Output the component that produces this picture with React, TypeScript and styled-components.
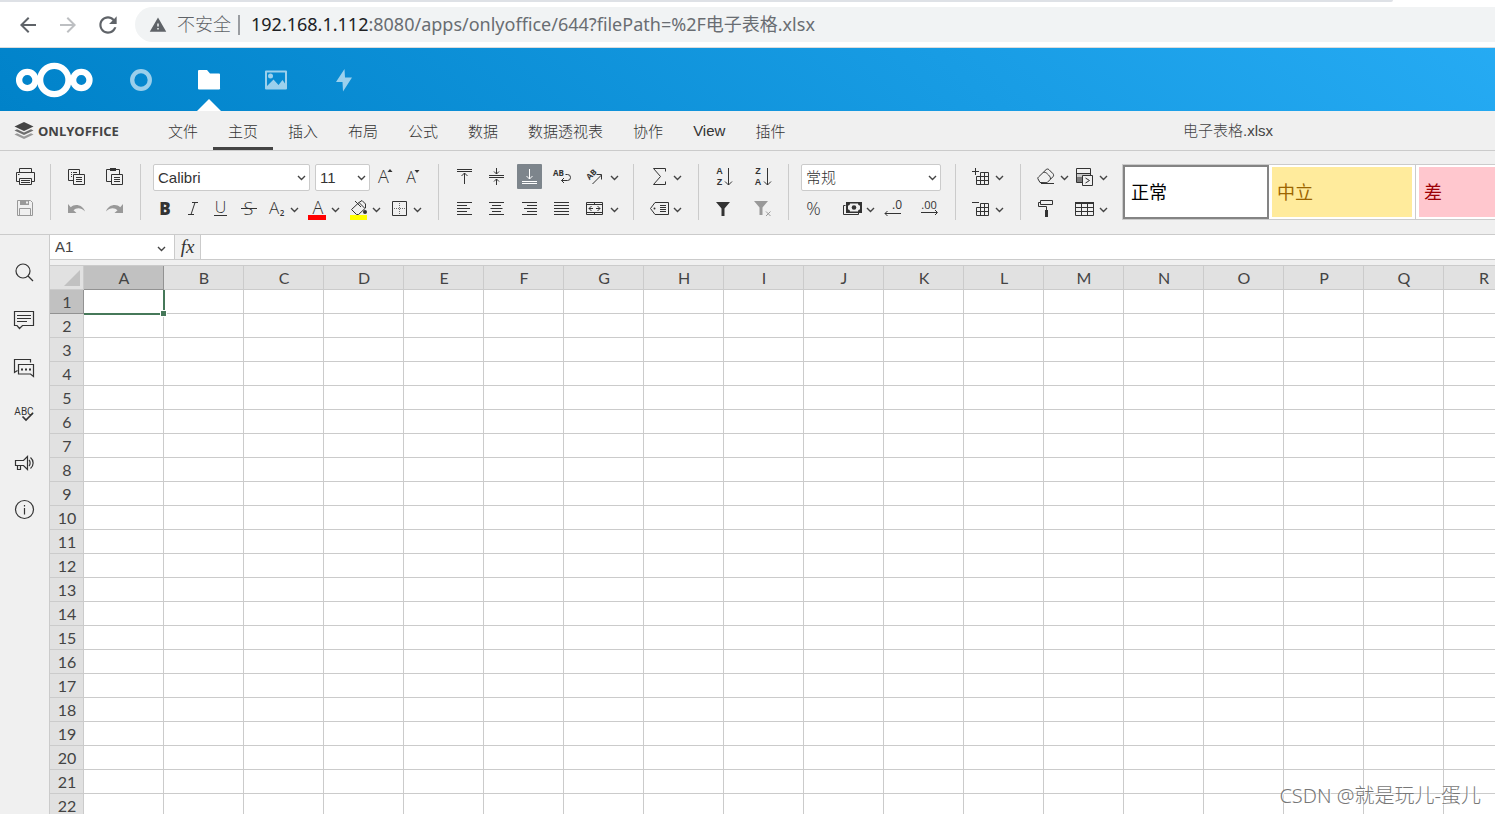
import React from "react";
import styled, { createGlobalStyle, css } from "styled-components";

const ui = `"Liberation Sans", "Noto Sans CJK SC", sans-serif`;
const humanist = `"Open Sans", "Noto Sans CJK SC", sans-serif`;
const ink = "#333";
const line = "#cbcbcb";

const GlobalStyle = createGlobalStyle`
  *, *::before, *::after { box-sizing: border-box; }
  body { margin: 0; background: #fff; color: #444; font-family: ${ui}; font-size: 15px; }
  button { border: 0; padding: 0; background: none; color: inherit; font: inherit; }
  a { color: inherit; text-decoration: none; }
  svg { display: block; flex: none; overflow: visible; }
`;

const Page = styled.div`
  display: flex;
  flex-direction: column;
  height: 100vh;
  overflow: hidden;
  position: relative;
`;

/* ---------- browser bar ---------- */

const TabStrip = styled.div`
  flex: none;
  height: 2px;
  margin-right: 102px;
  background: #dee1e6;
  border-bottom-right-radius: 4px;
`;

const BrowserBar = styled.header`
  flex: none;
  display: flex;
  align-items: center;
  height: 46px;
  padding-left: 8px;
  border-bottom: 1px solid #dcdcdc;
`;

const BrowserButton = styled.button<{ $dim?: boolean }>`
  display: flex;
  justify-content: center;
  width: 40px;
  color: ${(p) => (p.$dim ? "#bdbfc2" : "#5f6368")};
`;

const Omnibox = styled.div`
  flex: 1;
  display: flex;
  align-items: center;
  height: 35px;
  margin-left: 7px;
  padding-left: 14px;
  border-radius: 18px 0 0 18px;
  background: #f1f3f4;
  color: #5f6368;
  font-family: ${humanist};
  font-size: 18px;
  font-weight: 300;
  white-space: nowrap;
`;

const Security = styled.span`
  margin-left: 10px;
  padding: 0 7px 4px 0;
`;

const Divider = styled.span`
  width: 2px;
  height: 20px;
  margin-right: 11px;
  background: #9a9da1;
`;

const Url = styled.span`
  padding-bottom: 4px;
  color: #696d72;
  font-family: "Noto Sans", "Noto Sans CJK SC", sans-serif;
  font-weight: 400;
  b { font-weight: inherit; color: #202124; }
`;

/* ---------- cloud header ---------- */

const CloudBar = styled.header`
  flex: none;
  display: flex;
  align-items: stretch;
  height: 63px;
  padding-left: 15px;
  background: linear-gradient(40deg, #0082c9 0%, #30b6ff 128%);
  color: #fff;
`;

const Brand = styled.a`
  display: flex;
  align-items: center;
  width: 92px;
`;

const AppLink = styled.a<{ $active?: boolean }>`
  position: relative;
  display: flex;
  align-items: center;
  justify-content: center;
  width: 68px;
  svg { opacity: ${(p) => (p.$active ? 1 : 0.6)}; }
  ${(p) =>
    p.$active &&
    css`
      &::after {
        content: "";
        position: absolute;
        bottom: 0;
        left: 22px;
        border: 12px solid transparent;
        border-top-width: 0;
        border-bottom-color: #fff;
      }
    `}
`;

/* ---------- editor tabs ---------- */

const TabBar = styled.div`
  flex: none;
  display: flex;
  height: 40px;
  border-bottom: 1px solid ${line};
  background: #f0f0f0;
`;

const OfficeLogo = styled.a`
  display: flex;
  align-items: center;
  gap: 4px;
  width: 153px;
  padding-left: 14px;
  font-family: "Open Sans", sans-serif;
  font-size: 13px;
  font-weight: 700;
`;

const Tabs = styled.nav`
  display: flex;
`;

const Tab = styled.button<{ $active?: boolean }>`
  padding: 2px 15px 0;
  color: #333;
  font-weight: 300;
  border-bottom: 3px solid ${(p) => (p.$active ? "#444" : "transparent")};
`;

const DocTitle = styled.div`
  margin: 0 222px 0 auto;
  line-height: 40px;
  font-weight: 300;
`;

/* ---------- toolbar ---------- */

const Toolbar = styled.div`
  flex: none;
  display: flex;
  align-items: flex-start;
  height: 84px;
  padding-top: 13px;
  border-bottom: 1px solid ${line};
  background: #f0f0f0;
  overflow: hidden;
`;

const Group = styled.div<{ $left?: number; $right?: number; $last?: boolean }>`
  flex: none;
  display: flex;
  flex-direction: column;
  gap: 5px;
  height: 56px;
  padding: 0 ${(p) => p.$right ?? 14}px 0 ${(p) => p.$left ?? 14}px;
  border-right: ${(p) => (p.$last ? "0" : `1px solid ${line}`)};
`;

const Row = styled.div<{ $gap?: number }>`
  display: flex;
  flex: none;
  gap: ${(p) => p.$gap ?? 5}px;
  height: 27px;
`;

const NumberRow = styled.div`
  display: grid;
  grid-template-columns: 40px 41px 36px 23px;
  height: 27px;
`;

const Tool = styled.button<{ $wide?: boolean; $active?: boolean; $dim?: boolean }>`
  flex: none;
  display: flex;
  justify-content: center;
  width: ${(p) => (p.$wide ? 25 : 23)}px;
  height: ${(p) => (p.$active ? 25 : 27)}px;
  border-radius: 1px;
  background: ${(p) => (p.$active ? "#7d858c" : "none")};
  color: ${(p) => (p.$active ? "#fff" : p.$dim ? "#999" : ink)};
`;

const Split = styled.div`
  display: flex;
  flex: none;
`;

const CaretButton = styled.button`
  width: 13px;
  height: 27px;
  color: #444;
`;

const SelectBox = styled.label<{ $width: number }>`
  position: relative;
  display: block;
  flex: none;
  width: ${(p) => p.$width}px;
  height: 27px;
  svg { position: absolute; top: 0; right: 2px; pointer-events: none; }
`;

const Select = styled.select`
  appearance: none;
  width: 100%;
  height: 100%;
  padding: 0 4px;
  border: 1px solid ${line};
  border-radius: 2px;
  background: #fff;
  color: #333;
  font: 300 15px ${ui};
`;

const Gallery = styled.div`
  flex: 1;
  min-width: 0;
  display: flex;
  height: 56px;
  border: 1px solid ${line};
  border-width: 1px 0 1px 1px;
  background: #fff;
  overflow: hidden;
`;

const StyleCell = styled.button<{ $selected?: boolean }>`
  flex: none;
  width: 147px;
  padding: 2px 3px;
  border-right: 1px solid ${line};
  ${(p) =>
    p.$selected &&
    css`
      border-right: 0;
      outline: 2px solid #848484;
      outline-offset: -2px;
      width: 146px;
    `}
`;

const Swatch = styled.span<{ $bg: string; $fg: string }>`
  display: flex;
  align-items: center;
  height: 50px;
  padding: 0 0 3px 5px;
  background: ${(p) => p.$bg};
  color: ${(p) => p.$fg};
  font-size: 18px;
`;

/* ---------- body ---------- */

const Body = styled.div`
  flex: 1;
  min-height: 0;
  display: flex;
  background: #f0f0f0;
`;

const Sidebar = styled.nav`
  flex: none;
  display: flex;
  flex-direction: column;
  width: 50px;
  padding-top: 12px;
  border-right: 1px solid ${line};
`;

const SideButton = styled.button`
  display: flex;
  align-items: center;
  justify-content: center;
  flex: none;
  width: 50px;
  height: 48px;
  color: ${ink};
`;

const Workspace = styled.main`
  flex: 1;
  min-width: 0;
  display: flex;
  flex-direction: column;
`;

const FormulaBar = styled.div`
  flex: none;
  display: flex;
  height: 25px;
  margin-bottom: 5px;
  border-bottom: 1px solid ${line};
  background: #fff;
`;

const NameInput = styled.input`
  width: 105px;
  padding: 0 5px 2px;
  border: 0;
  color: #444;
  font: 15px ${ui};
`;

const NameCaret = styled.button`
  width: 20px;
  border-right: 1px solid ${line};
`;

const FxButton = styled.button`
  width: 26px;
  border-right: 1px solid ${line};
  background: #f0f0f0;
  font: italic 19px "Liberation Serif", serif;
  color: ${ink};
`;

const FormulaInput = styled.input`
  flex: 1;
  min-width: 0;
  border: 0;
  font: 15px ${ui};
`;

const SheetArea = styled.div`
  flex: 1;
  min-height: 0;
  overflow: hidden;
  background: #fff;
  border-top: 1px solid ${line};
`;

const Sheet = styled.table`
  width: 1474px;
  table-layout: fixed;
  border-collapse: separate;
  border-spacing: 0;
  font-family: Lato, sans-serif;
  font-size: 16px;
  tr { height: 24px; }
`;

const HeadCell = styled.th<{ $on?: boolean }>`
  height: 24px;
  padding: 0 0 0 1px;
  border: 1px solid ${(p) => (p.$on ? "#929292" : line)};
  border-width: 0 1px 1px 0;
  background: ${(p) => (p.$on ? "#c1c1c1" : "#e1e1e1")};
  color: #444;
  font-weight: 400;
  line-height: 22px;
  text-align: center;
`;

const Corner = styled.td`
  padding: 0;
  border: 1px solid ${line};
  border-width: 0 1px 1px 0;
  background: #e1e1e1;
  svg { margin-left: 14px; }
`;

const Cell = styled.td`
  position: relative;
  height: 24px;
  padding: 0;
  border: 1px solid ${line};
  border-width: 0 1px 1px 0;
`;

const Selection = styled.div`
  position: absolute;
  z-index: 1;
  inset: 0 -2px -2px 0;
  border: 2px solid #467859;
  border-width: 0 2px 2px 0;
  &::after {
    content: "";
    position: absolute;
    right: -4px;
    bottom: -4px;
    width: 7px;
    height: 7px;
    border: 1px solid #fff;
    background: #467859;
  }
`;

const Watermark = styled.div`
  position: absolute;
  right: 14px;
  bottom: 3px;
  font-family: "Noto Sans", "Noto Sans CJK SC", sans-serif;
  font-size: 20px;
  font-weight: 300;
  line-height: 30px;
  color: #777;
  text-shadow: 1px 1px 0 #fff;
`;

/* ---------- icons ---------- */

type Kids = { children: React.ReactNode };

const Glyph = ({ children }: Kids) => (
  <svg width="23" height="27" viewBox="0 0 23 27" fill="none" stroke="currentColor" aria-hidden="true">
    {children}
  </svg>
);

const Caret = () => (
  <svg width="13" height="27" viewBox="0 0 13 27" fill="none" stroke="#444" strokeWidth="1.4" aria-hidden="true">
    <path d="M3 12l3.5 3.5L10 12" />
  </svg>
);

const Letter = ({ x, y, size, weight = 400, family = "Open Sans", extra, children }: Kids & { x: number; y: number; size: number; weight?: number; family?: string; extra?: React.SVGProps<SVGTextElement> }) => (
  <text x={x} y={y} fontSize={size} fontWeight={weight} fontFamily={family} fill="currentColor" stroke="none" textAnchor="middle" {...extra}>
    {children}
  </text>
);

const icons: Record<string, React.ReactNode> = {
  print: <><path d="M5.5 8.5v-4h12v4M5.5 17.5h-3v-9h18v9h-3M5.5 14.5h12v6h-12zM7 16.5h9M7 18.5h9M4 10.5h1.5" /></>,
  save: <><path d="M3.5 4.5h13l2 2v13h-15zM5.5 19.5v-7h11v7" /><path d="M6 5h9v4H6z" fill="currentColor" stroke="none" /><path d="M12 5.5h2v2h-2z" fill="#f0f0f0" stroke="none" /></>,
  copy: <><path d="M8.5 16.5h-5v-11h11v5M8.5 10.5h11v10h-11zM11 13.5h6M11 15.5h6M11 17.5h6M6 8.5h1M8 8.5h4M6 10.5h1M6 12.5h1" /></>,
  paste: <><path d="M8.5 17.5h-5v-12h13v5M8.5 10.5h11v10h-11zM11 13.5h6M11 15.5h6M11 17.5h6" /><path d="M7 4h6v3H7z" fill="currentColor" stroke="none" /></>,
  undo: <path d="M3 8v9h8.500l-3-2.700C11 11.500 16 11 20 15.500C17.500 8.500 9.500 7.500 5.800 11.300z" fill="currentColor" stroke="none" />,
  redo: <path d="M20 8v9h-8.500l3-2.700C12 11.500 7 11 3 15.500C5.500 8.500 13.500 7.500 17.200 11.300z" fill="currentColor" stroke="none" />,
  grow: <><Letter x={8.500} y={19} size={18} weight={300}>A</Letter><path d="M12.500 8h5L15 5z" fill="currentColor" stroke="none" /></>,
  shrink: <><Letter x={8} y={19} size={16} weight={300}>A</Letter><path d="M11.500 6h5L14 9z" fill="currentColor" stroke="none" /></>,
  bold: <Letter x={12} y={19} size={17} weight={800}>B</Letter>,
  italic: <path d="M11 6.500h6M7 18.500h6M14 6.500l-4 12" />,
  underline: <><Letter x={11.500} y={17} size={16} weight={300}>U</Letter><path d="M5 19.500h13" /></>,
  strike: <><Letter x={11.500} y={19} size={18} weight={300}>S</Letter><path d="M4 12.500h16" /></>,
  sub: <><Letter x={9} y={18} size={17} weight={300}>A</Letter><Letter x={17} y={20} size={8} weight={600}>2</Letter></>,
  color: <><Letter x={12} y={18} size={18} weight={300}>A</Letter><path d="M2 19h18v5H2z" fill="#f00" stroke="none" /></>,
  fill: <><path d="M4.500 13.500l7.500-7l6 6l-6.500 6h-2zM12 6.500l3-2l3.500 3.500v4M8 5l6 6" /><circle cx="18" cy="16" r="2" fill="currentColor" stroke="none" /><path d="M3 19h17v5H3z" fill="#ff0" stroke="none" /></>,
  border: <><path d="M4.500 5.500h14v14h-14z" /><path d="M6 12.500h12M11.500 7v12" strokeDasharray="1 1" opacity=".7" /></>,
  top: <path d="M5 5.500h15M5 7.500h15M12.500 20V9M9.500 12l3-3l3 3" />,
  middle: <path d="M4 11.500h15M4 13.500h15M11.500 4v6M9 7.500l2.500 2.500l2.500-2.500M11.500 21v-6M9 17.500l2.500-2.500l2.500 2.500" />,
  bottom: <path d="M4 17.500h15M4 19.500h15M11.500 5v10M8.500 12l3 3l3-3" />,
  wrap: <><Letter x={7.500} y={12} size={8} weight={700}>AB</Letter><path d="M14.500 10.500h2a3 3 0 0 1 0 6h-6M13 14l-2.500 2.500L13 19" /></>,
  orient: <><Letter x={8} y={13} size={8} weight={700} extra={{ transform: "rotate(-45 8 11)" }}>AB</Letter><path d="M8.500 20l9-9M12.500 10.500h5v5" /></>,
  left: <path d="M5 6.500h15M5 9.500h10M5 12.500h13M5 15.500h10M5 18.500h15" />,
  center: <path d="M4 6.500h15M7 9.500h9M5.500 12.500h12M7 15.500h9M4 18.500h15" />,
  right: <path d="M4 6.500h15M9 9.500h10M6 12.500h13M9 15.500h10M4 18.500h15" />,
  justify: <path d="M3 6.500h15M3 9.500h15M3 12.500h15M3 15.500h15M3 18.500h15" />,
  merge: <><path d="M2.500 6.500h16v12h-16zM2.500 8.500h16M2.500 16.500h16M10.500 6v3M10.500 16v3M5 12.500h4M12 12.500h4M7.500 10L5 12.500L7.500 15M13.500 10l2.500 2.500l-2.500 2.500" /></>,
  sum: <path d="M17.500 7.500v-3H5.500l7 8l-7 8h12v-3" />,
  tag: <><path d="M7 6.500h13.500v12H7l-4.500-6zM12 9.500h6M12 11.500h6M12 13.500h6M12 15.500h6" /><circle cx="6.500" cy="12.500" r="1" fill="currentColor" stroke="none" /></>,
  az: <><Letter x={6.500} y={10} size={9} weight={700} family="Liberation Sans">A</Letter><Letter x={6.500} y={21} size={9} weight={700} family="Liberation Sans">Z</Letter><path d="M15.500 4v17M12 17.500l3.500 3.500l3.500-3.500" /></>,
  za: <><Letter x={7} y={10} size={9} weight={700} family="Liberation Sans">Z</Letter><Letter x={7} y={21} size={9} weight={700} family="Liberation Sans">A</Letter><path d="M16.500 4v17M13 17.500l3.500 3.500l3.500-3.500" /></>,
  filter: <path d="M3 6h14l-5.500 6.500V20h-3v-7.500z" fill="currentColor" stroke="none" />,
  unfilter: <><path d="M3 5h14l-5.500 6.500V19h-3v-7.500z" fill="currentColor" stroke="none" /><path d="M15 15.500l4.500 4.500M19.500 15.500L15 20" /></>,
  percent: <Letter x={12.500} y={19} size={18} weight={300}>%</Letter>,
  money: <><path d="M4.500 9.500h-2v9h15v-2" /><path d="M5 6h16v11H5z" fill="currentColor" stroke="none" /><path d="M9 7.500h8c0 1.500 1 2 2 2v4c-1 0-2 .5-2 2H9c0-1.500-1-2-2-2v-4c1 0 2-.5 2-2z" fill="#f0f0f0" stroke="none" /><circle cx="13" cy="11.500" r="2.300" fill="currentColor" stroke="none" /></>,
  lessDec: <><Letter x={15} y={13} size={12}>.0</Letter><path d="M19 17.500H3M5.500 15L3 17.500L5.500 20" /></>,
  moreDec: <><Letter x={11} y={13} size={11}>.00</Letter><path d="M3 16.500h16M17 14l2.500 2.500L17 19" /></>,
  insert: <path d="M5.500 4v7M2 7.500h7M10.500 8.500h8v12h-12v-8h12M6.500 16.500h12M10.500 8.500v12M14.500 8.500v12" />,
  remove: <path d="M2 6.500h7M10.500 7.500h8v12h-12v-8h12M6.500 15.500h12M10.500 7.500v12M14.500 7.500v12" />,
  eraser: <path d="M6 19.500h13M5 18.500l-2-3.500c-.5-1 0-1.500.5-2L11 5.700c1-.9 2-.9 3 0l4 4c.8 1 .8 2 0 3l-6 6zM8.500 8.500c1.500-.5 3 .3 4 1.500c1.500 1.500 3 2.500 3 5" />,
  cond: <><path d="M3 9h14v4H3z" fill="#c8c8c8" stroke="none" /><path d="M3 13h14v5H3z" fill="#7a7a7a" stroke="none" /><path d="M2.500 4.500h14v14h-14zM2.500 9.500h14" /><path d="M8.500 11.500h10v10h-10z" fill="#f0f0f0" /><path d="M11.500 14l4 2.500l-4 2.500" /></>,
  painter: <><path d="M5.500 4.500h12v4h-12zM5.500 6.500h-2v4h8V14" /><path d="M10 14h3v7h-3z" fill="currentColor" stroke="none" /></>,
  table: <><path d="M1.500 7.500h18v12h-18zM1.500 11.500h18M1.500 15.500h18M7.500 8v12M13.500 8v12" /><path d="M1 6h19v2H1z" fill="currentColor" stroke="none" /></>,
};

const ToolButton = ({ icon, label, wide, active, dim }: { icon: string; label: string; wide?: boolean; active?: boolean; dim?: boolean }) => (
  <Tool aria-label={label} $wide={wide} $active={active} $dim={dim}>
    <Glyph>{icons[icon]}</Glyph>
  </Tool>
);

const SplitTool = (props: { icon: string; label: string; wide?: boolean }) => (
  <Split>
    <ToolButton {...props} />
    <CaretButton aria-label={`${props.label} ▾`}><Caret /></CaretButton>
  </Split>
);

const Combo = ({ label, value, width }: { label: string; value: string; width: number }) => (
  <SelectBox $width={width}>
    <Select aria-label={label} defaultValue={value}><option>{value}</option></Select>
    <Caret />
  </SelectBox>
);

const Svg24 = ({ children, size = 24, ...rest }: Kids & { size?: number } & React.SVGProps<SVGSVGElement>) => (
  <svg width={size} height={size} viewBox="0 0 24 24" aria-hidden="true" {...rest}>{children}</svg>
);

const sideIcons: [string, React.ReactNode][] = [
  ["搜索", <><circle cx="10" cy="12" r="7" /><path d="M15 17l5 5" /></>],
  ["批注", <path d="M1.500 4.500h19v14h-11l-3 3l-2.500-3h-2.500zM4 8.500h14M4 11.500h14M4 14.500h10" />],
  ["聊天", <><path d="M17.500 7.500v-3h-16v13l3-2M5.500 9.500h15v12l-3-2.500h-12z" /><path d="M8 14.500h2M12 14.500h2M16 14.500h2" strokeWidth="2" /></>],
  ["拼写检查", <><text x="11" y="12" fontSize="10" fontFamily="Roboto" textAnchor="middle" fill="currentColor" stroke="none">ABC</text><path d="M9.500 13.500l3.500 3.500l7-7" strokeWidth="1.700" /></>],
  ["反馈", <path d="M2.500 9.500h8l4-4v13l-4-4h-8zM4.500 14.500v4h3v-4M16 9c1.500 1.500 1.500 4.500 0 6M17.500 6.500c3.500 3 3.500 8 0 11" />],
  ["关于", <><circle cx="11.500" cy="10.500" r="9" /><path d="M11.500 9v6.500M11.500 6v1.500" /></>],
];

const tabs = ["文件", "主页", "插入", "布局", "公式", "数据", "数据透视表", "协作", "View", "插件"];
const columns = "ABCDEFGHIJKLMNOPQR".split("");
const rows = Array.from({ length: 22 }, (_, i) => i + 1);
const cellStyles = [
  { name: "正常", bg: "#fff", fg: "#000" },
  { name: "中立", bg: "#ffeb9c", fg: "#9c6500" },
  { name: "差", bg: "#ffc7ce", fg: "#9c0006" },
];

export default function App() {
  return (
    <Page>
      <GlobalStyle />
      <TabStrip />
      <BrowserBar>
        <BrowserButton aria-label="后退">
          <Svg24 fill="currentColor"><path d="M20 11H7.830l5.590-5.590L12 4l-8 8 8 8 1.410-1.410L7.830 13H20v-2z" /></Svg24>
        </BrowserButton>
        <BrowserButton aria-label="前进" $dim>
          <Svg24 fill="currentColor"><path d="M4 11h12.170l-5.590-5.590L12 4l8 8-8 8-1.410-1.410L16.170 13H4v-2z" /></Svg24>
        </BrowserButton>
        <BrowserButton aria-label="重新加载">
          <Svg24 size={26} fill="currentColor"><path d="M17.650 6.350C16.200 4.900 14.210 4 12 4c-4.420 0-7.990 3.580-7.990 8s3.570 8 7.990 8c3.730 0 6.840-2.550 7.730-6h-2.080c-.82 2.330-3.040 4-5.650 4-3.310 0-6-2.690-6-6s2.690-6 6-6c1.660 0 3.140.69 4.220 1.780L13 11h7V4l-2.350 2.350z" /></Svg24>
        </BrowserButton>
        <Omnibox>
          <Svg24 size={18} fill="currentColor"><path d="M1 21h22L12 2 1 21zm12-3h-2v-2h2v2zm0-4h-2v-4h2v4z" /></Svg24>
          <Security>不安全</Security>
          <Divider />
          <Url><b>192.168.1.112</b>:8080/apps/onlyoffice/644?filePath=%2F电子表格.xlsx</Url>
        </Omnibox>
      </BrowserBar>

      <CloudBar>
        <Brand href="#" aria-label="Nextcloud">
          <svg width="80" height="38" viewBox="0 0 80 38" fill="none" stroke="#fff" strokeWidth="6.300" aria-hidden="true">
            <circle cx="12.300" cy="19" r="8.200" />
            <circle cx="39.300" cy="19" r="14.200" />
            <circle cx="66.300" cy="19" r="8.200" />
          </svg>
        </Brand>
        <AppLink href="#" aria-label="仪表盘">
          <Svg24 fill="none" stroke="#fff" strokeWidth="4.300"><circle cx="12" cy="12" r="8.800" /></Svg24>
        </AppLink>
        <AppLink href="#" aria-label="文件" $active>
          <Svg24 fill="#fff"><path d="M2 2h8l3 3.500h9a1 1 0 0 1 1 1V20a1 1 0 0 1-1 1.500H2a1 1 0 0 1-1-1V3a1 1 0 0 1 1-1z" /></Svg24>
        </AppLink>
        <AppLink href="#" aria-label="照片">
          <Svg24 fill="#fff"><path fillRule="evenodd" d="M1 2.500h20a1 1 0 0 1 1 1v17a1 1 0 0 1-1 1H1a1 1 0 0 1-1-1v-17a1 1 0 0 1 1-1zM2 4.500v13.500L8.500 11.500l5 5.500l4-5l2.500 3.500V4.500z" /><circle cx="5.500" cy="8" r="2.500" /></Svg24>
        </AppLink>
        <AppLink href="#" aria-label="动态">
          <Svg24 fill="#fff"><path d="M11.500 1L3 14h6.500l.5 9.500L19 9.500h-7z" /></Svg24>
        </AppLink>
      </CloudBar>

      <TabBar>
        <OfficeLogo href="#">
          <svg width="20" height="20" viewBox="0 0 20 20" fill="#444" aria-hidden="true">
            <path d="M10 1l9.500 4.500L10 10L.5 5.500z" />
            <path d="M.5 9.500l2.500-1.200l7 3.200l7-3.200l2.500 1.200L10 14z" opacity=".75" />
            <path d="M.5 13.500l2.500-1.200l7 3.200l7-3.200l2.500 1.200L10 18z" opacity=".5" />
          </svg>
          ONLYOFFICE
        </OfficeLogo>
        <Tabs>
          {tabs.map((t) => <Tab key={t} $active={t === "主页"}>{t}</Tab>)}
        </Tabs>
        <DocTitle>电子表格.xlsx</DocTitle>
      </TabBar>

      <Toolbar>
        <Group $right={13}>
          <Row><ToolButton icon="print" label="打印" /></Row>
          <Row><ToolButton icon="save" label="保存" dim /></Row>
        </Group>
        <Group>
          <Row $gap={15}><ToolButton icon="copy" label="复制" /><ToolButton icon="paste" label="粘贴" /></Row>
          <Row $gap={15}><ToolButton icon="undo" label="撤消" dim /><ToolButton icon="redo" label="重做" dim /></Row>
        </Group>
        <Group $left={12} $right={12}>
          <Row>
            <Combo label="字体" value="Calibri" width={157} />
            <Combo label="字体大小" value="11" width={55} />
            <ToolButton icon="grow" label="增大字体" />
            <ToolButton icon="shrink" label="减小字体" />
          </Row>
          <Row>
            <ToolButton icon="bold" label="加粗" />
            <ToolButton icon="italic" label="倾斜" />
            <ToolButton icon="underline" label="下划线" />
            <ToolButton icon="strike" label="删除线" />
            <SplitTool icon="sub" label="下标" />
            <SplitTool icon="color" label="字体颜色" />
            <SplitTool icon="fill" label="填充颜色" />
            <SplitTool icon="border" label="边框" />
          </Row>
        </Group>
        <Group $left={12} $right={12}>
          <Row $gap={8}>
            <ToolButton icon="top" label="顶端对齐" wide />
            <ToolButton icon="middle" label="垂直居中" wide />
            <ToolButton icon="bottom" label="底端对齐" wide active />
            <ToolButton icon="wrap" label="自动换行" wide />
            <SplitTool icon="orient" label="方向" wide />
          </Row>
          <Row $gap={8}>
            <ToolButton icon="left" label="左对齐" wide />
            <ToolButton icon="center" label="居中" wide />
            <ToolButton icon="right" label="右对齐" wide />
            <ToolButton icon="justify" label="两端对齐" wide />
            <SplitTool icon="merge" label="合并" wide />
          </Row>
        </Group>
        <Group>
          <Row><SplitTool icon="sum" label="求和" /></Row>
          <Row><SplitTool icon="tag" label="命名范围" /></Row>
        </Group>
        <Group>
          <Row $gap={15}><ToolButton icon="az" label="升序" /><ToolButton icon="za" label="降序" /></Row>
          <Row $gap={15}><ToolButton icon="filter" label="筛选" /><ToolButton icon="unfilter" label="清除筛选" dim /></Row>
        </Group>
        <Group $left={12}>
          <Row><Combo label="数字格式" value="常规" width={140} /></Row>
          <NumberRow>
            <ToolButton icon="percent" label="百分比" />
            <SplitTool icon="money" label="会计格式" />
            <ToolButton icon="lessDec" label="减少小数位" />
            <ToolButton icon="moreDec" label="增加小数位" />
          </NumberRow>
        </Group>
        <Group>
          <Row><SplitTool icon="insert" label="插入单元格" /></Row>
          <Row><SplitTool icon="remove" label="删除单元格" /></Row>
        </Group>
        <Group $right={12} $last>
          <Row $gap={3}><SplitTool icon="eraser" label="清除" /><SplitTool icon="cond" label="条件格式" /></Row>
          <Row $gap={16}><ToolButton icon="painter" label="格式刷" /><SplitTool icon="table" label="表格格式" /></Row>
        </Group>
        <Gallery>
          {cellStyles.map((s, i) => (
            <StyleCell key={s.name} $selected={i === 0}>
              <Swatch $bg={s.bg} $fg={s.fg}>{s.name}</Swatch>
            </StyleCell>
          ))}
        </Gallery>
      </Toolbar>

      <Body>
        <Sidebar>
          {sideIcons.map(([label, drawing]) => (
            <SideButton key={label} aria-label={label}>
              <Svg24 fill="none" stroke="currentColor" strokeWidth="1.200">{drawing}</Svg24>
            </SideButton>
          ))}
        </Sidebar>
        <Workspace>
          <FormulaBar>
            <NameInput aria-label="名称框" defaultValue="A1" />
            <NameCaret aria-label="名称列表"><Caret /></NameCaret>
            <FxButton aria-label="插入函数">fx</FxButton>
            <FormulaInput aria-label="编辑栏" />
          </FormulaBar>
          <SheetArea>
            <Sheet>
              <colgroup>
                <col width="34" />
                {columns.map((c) => <col key={c} width="80" />)}
              </colgroup>
              <thead>
                <tr>
                  <Corner>
                    <svg width="16" height="16" viewBox="0 0 16 16" fill="#c1c1c1" aria-hidden="true"><path d="M16 0v16H0z" /></svg>
                  </Corner>
                  {columns.map((c) => <HeadCell key={c} scope="col" $on={c === "A"}>{c}</HeadCell>)}
                </tr>
              </thead>
              <tbody>
                {rows.map((r) => (
                  <tr key={r}>
                    <HeadCell scope="row" $on={r === 1}>{r}</HeadCell>
                    {columns.map((c) => <Cell key={c}>{r === 1 && c === "A" && <Selection />}</Cell>)}
                  </tr>
                ))}
              </tbody>
            </Sheet>
          </SheetArea>
        </Workspace>
      </Body>
      <Watermark>CSDN @就是玩儿-蛋儿</Watermark>
    </Page>
  );
}
